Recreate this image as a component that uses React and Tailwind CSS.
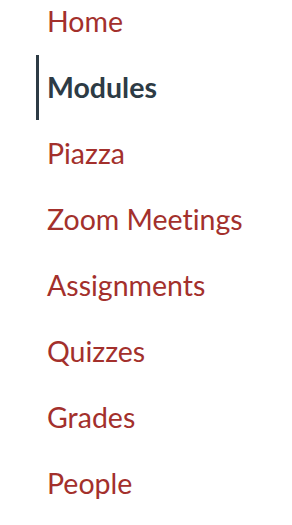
import React from "react";

const items = [
  { label: "Home" },
  { label: "Modules", active: true },
  { label: "Piazza" },
  { label: "Zoom Meetings" },
  { label: "Assignments" },
  { label: "Quizzes" },
  { label: "Grades" },
  { label: "People" },
];

function App() {
  return (
    <div className="min-h-screen bg-white pl-9 font-['Lato',sans-serif] [font-variant-ligatures:none]">
      <ul className="-mt-[12px]">
        {items.map((item) => (
          <li key={item.label} className="h-[66px] flex items-center">
            <a
              href="#"
              className={
                item.active
                  ? "flex items-center h-[65px] border-l-[3px] border-[#2d3b45] pl-[8px] text-[28.5px] font-bold text-[#2d3b45]"
                  : "flex items-center h-[65px] border-l-[3px] border-transparent pl-[8px] text-[28.5px] text-[#a3302c]"
              }
            >
              {item.label}
            </a>
          </li>
        ))}
      </ul>
    </div>
  );
}

export default App;
